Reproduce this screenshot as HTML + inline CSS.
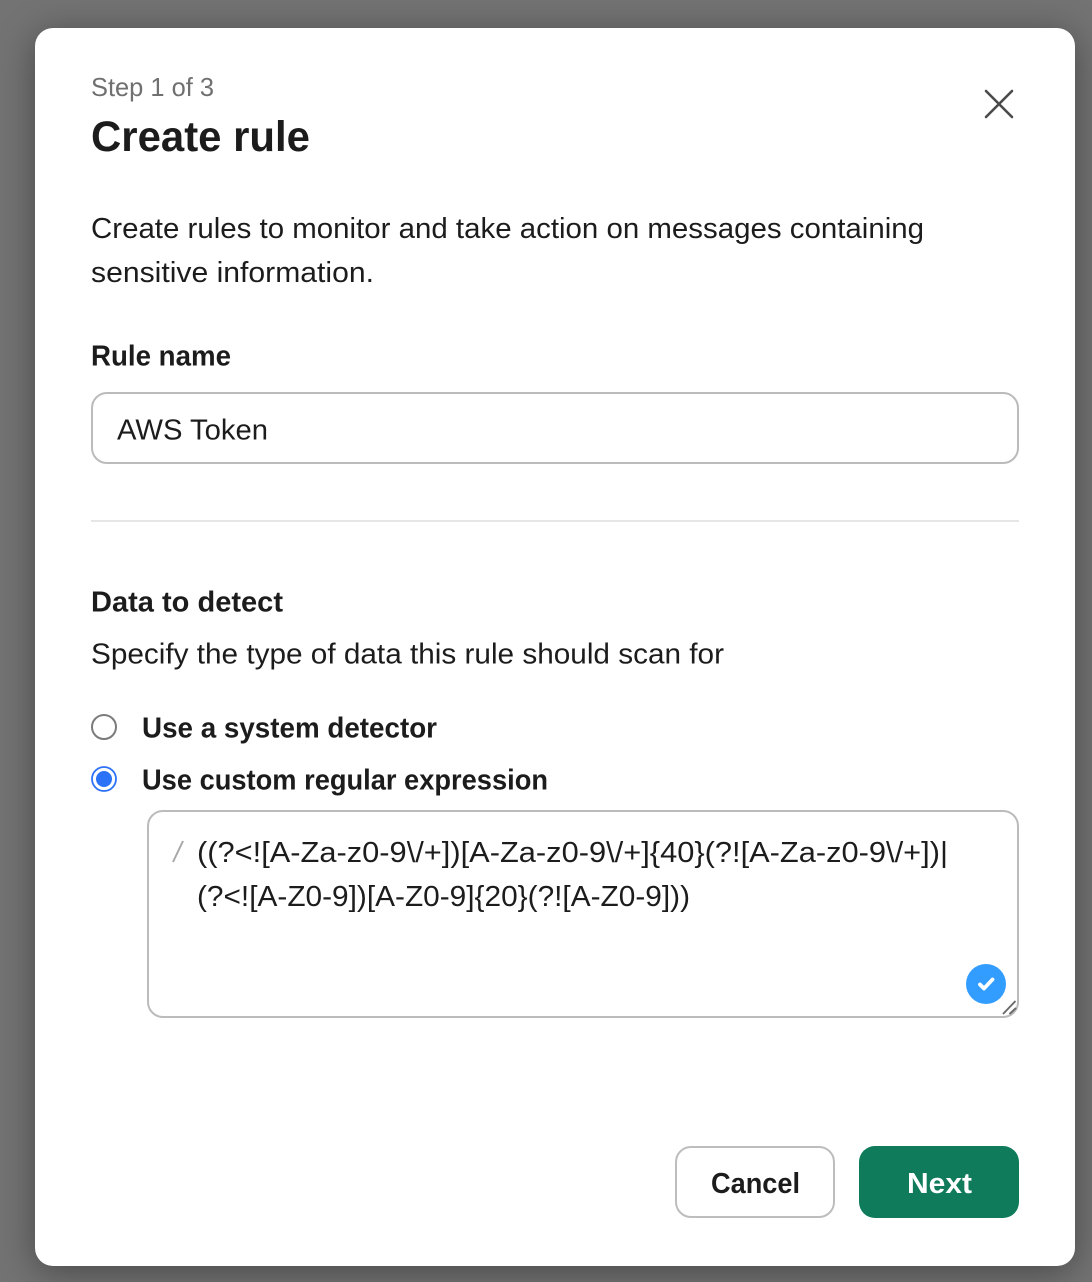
<!DOCTYPE html>
<html>
<head>
<meta charset="utf-8">
<style>
html,body{margin:0;padding:0;width:1092px;height:1282px;overflow:hidden;background:#6e6e6e}
#bg{position:absolute;left:0;top:0;width:1092px;height:1282px;background:#737373}
#modal{position:absolute;left:35px;top:28px;width:1040px;height:1238px;background:#fff;border-radius:18px;box-shadow:0 6px 36px rgba(0,0,0,.38)}
svg{position:absolute;left:0;top:0}
text{font-family:"Liberation Sans",sans-serif;fill:#1d1c1d;font-size:29px}
.b{font-weight:700}
</style>
</head>
<body>
<div id="bg"></div>
<div id="modal"></div>
<svg width="1092" height="1282" viewBox="0 0 1092 1282" xmlns="http://www.w3.org/2000/svg">
<text x="91" y="96" style="font-size:26px;fill:#707070" textLength="123" lengthAdjust="spacingAndGlyphs">Step 1 of 3</text>
<text x="91" y="151" class="b" style="font-size:43px" textLength="219" lengthAdjust="spacingAndGlyphs">Create rule</text>
<path d="M986 91L1012 117M1012 91L986 117" stroke="#4a4a4a" stroke-width="2.600" stroke-linecap="round" fill="none"/>
<text x="91" y="238" textLength="833" lengthAdjust="spacingAndGlyphs">Create rules to monitor and take action on messages containing</text>
<text x="91" y="282" textLength="283" lengthAdjust="spacingAndGlyphs">sensitive information.</text>
<text x="91" y="365.500" class="b" textLength="140" lengthAdjust="spacingAndGlyphs">Rule name</text>
<rect x="92" y="393" width="926" height="70" rx="15" fill="#fff" stroke="#bbbbbb" stroke-width="2"/>
<text x="117" y="439.500" textLength="151" lengthAdjust="spacingAndGlyphs">AWS Token</text>
<rect x="91" y="520" width="928" height="2" fill="#e6e6e6"/>
<text x="91" y="611.500" class="b" textLength="192" lengthAdjust="spacingAndGlyphs">Data to detect</text>
<text x="91" y="663.500" textLength="633" lengthAdjust="spacingAndGlyphs">Specify the type of data this rule should scan for</text>
<circle cx="104" cy="727" r="12" fill="#fff" stroke="#7b7b7b" stroke-width="2"/>
<text x="142" y="737.500" class="b" textLength="295" lengthAdjust="spacingAndGlyphs">Use a system detector</text>
<circle cx="104" cy="779" r="12" fill="#fff" stroke="#2b72f6" stroke-width="1.800"/>
<circle cx="104" cy="779" r="8" fill="#2b72f6"/>
<text x="142" y="789.500" class="b" textLength="406" lengthAdjust="spacingAndGlyphs">Use custom regular expression</text>
<rect x="148" y="811" width="870" height="206" rx="15" fill="#fff" stroke="#bbbbbb" stroke-width="2"/>
<path d="M173 862L183 841" stroke="#a8a8a8" stroke-width="2" fill="none"/>
<text x="197" y="862" textLength="751" lengthAdjust="spacingAndGlyphs">((?&lt;![A-Za-z0-9\/+])[A-Za-z0-9\/+]{40}(?![A-Za-z0-9\/+])|</text>
<text x="197" y="906" textLength="493" lengthAdjust="spacingAndGlyphs">(?&lt;![A-Z0-9])[A-Z0-9]{20}(?![A-Z0-9]))</text>
<circle cx="986" cy="984" r="20" fill="#339dff"/>
<path d="M980 984.500L984 988.500L992.500 979.500" stroke="#fff" stroke-width="3.800" stroke-linecap="round" stroke-linejoin="round" fill="none"/>
<path d="M1003 1014L1015.500 1001M1009.500 1014L1016 1008" stroke="#6a6a6a" stroke-width="1.900" fill="none"/>
<rect x="676" y="1147" width="158" height="70" rx="15" fill="#fff" stroke="#bdbdbd" stroke-width="2"/>
<text x="711" y="1193" class="b" textLength="89" lengthAdjust="spacingAndGlyphs">Cancel</text>
<rect x="859" y="1146" width="160" height="72" rx="16" fill="#0f7b5b"/>
<text x="907" y="1193" class="b" style="fill:#fff" textLength="65" lengthAdjust="spacingAndGlyphs">Next</text>
</svg>
</body>
</html>
